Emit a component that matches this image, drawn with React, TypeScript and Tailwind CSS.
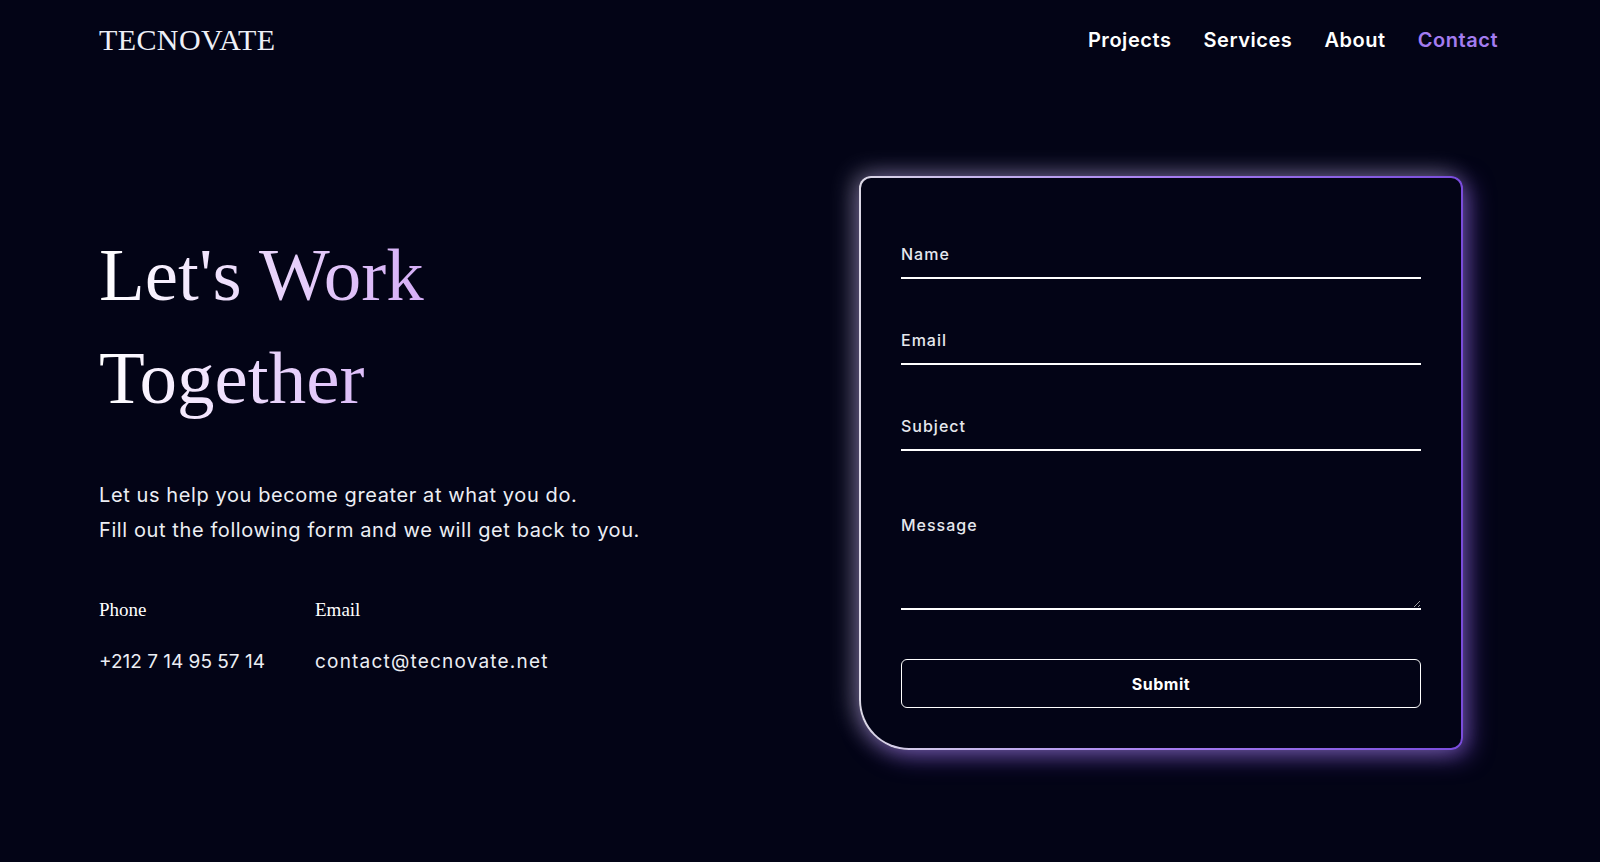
export default function App() {
  const sans = "font-['Inter','Open_Sans',sans-serif]";

  return (
    <div className={`min-h-[862px] w-full bg-[#030416] text-white ${sans}`}>
      <header className="flex h-[80px] items-center justify-between pl-[99px] pr-[102px]">
        <div className="font-['Liberation_Serif',serif] text-[30px] leading-none tracking-[0.4px] text-[#eef0f6]">
          TECNOVATE
        </div>
        <nav className="flex items-center gap-[32px] text-[20px] font-semibold tracking-[0.55px]">
          <a className="text-white">Projects</a>
          <a className="text-white">Services</a>
          <a className="text-white">About</a>
          <a className="text-[#a37cf0]">Contact</a>
        </nav>
      </header>

      <main className="flex pl-[99px] pr-[102px] pt-[96px]">
        <section className="flex-1 pt-[47px]">
          <h1 className="w-fit bg-gradient-to-r from-[#ffffff] to-[#d5aef6] bg-clip-text font-['Liberation_Serif',serif] text-[75px] leading-[103px] text-transparent">
            Let's Work
            <br />
            Together
          </h1>

          <p className="mt-[49px] text-[20px] leading-[35px] tracking-[0.6px] text-[#eceef4]">
            Let us help you become greater at what you do.
            <br />
            Fill out the following form and we will get back to you.
          </p>

          <div className="mt-[50px] grid grid-cols-[216px_auto]">
            <div className="font-['Liberation_Serif',serif] text-[19px] leading-[24px]">Phone</div>
            <div className="font-['Liberation_Serif',serif] text-[19px] leading-[24px]">Email</div>
            <div className="mt-[26px] text-[19px] leading-[28px] tracking-[0px] text-[#eceef4]">+212 7 14 95 57 14</div>
            <div className="mt-[26px] text-[19px] leading-[28px] tracking-[1.2px] text-[#eceef4]">
              contact@tecnovate.net
            </div>
          </div>
        </section>

        <div className="mr-[35px] w-[604px] rounded-[12px] rounded-bl-[50px] bg-gradient-to-r from-[#dcd8e6] via-[#a87ef2] to-[#7a4cdc] p-[2px] shadow-[-6px_-3px_24px_rgba(255,255,255,0.32),6px_6px_24px_rgba(130,80,230,0.6)]">
          <form
            onSubmit={(e) => e.preventDefault()}
            className="flex flex-col rounded-[10px] rounded-bl-[48px] bg-[#030416] px-[40px] pb-[40px] pt-[53px]"
          >
            <input
              placeholder="Name"
              className="h-[48px] border-0 border-b-2 border-white bg-transparent text-[16px] font-medium tracking-[1px] text-white outline-none placeholder:text-[#e6e8ee]"
            />
            <input
              placeholder="Email"
              className="mt-[38px] h-[48px] border-0 border-b-2 border-white bg-transparent text-[16px] font-medium tracking-[1px] text-white outline-none placeholder:text-[#e6e8ee]"
            />
            <input
              placeholder="Subject"
              className="mt-[38px] h-[48px] border-0 border-b-2 border-white bg-transparent text-[16px] font-medium tracking-[1px] text-white outline-none placeholder:text-[#e6e8ee]"
            />
            <textarea
              placeholder="Message"
              className="mt-[38px] h-[121px] border-0 border-b-2 border-white bg-transparent pt-[24px] text-[16px] font-medium tracking-[1px] text-white outline-none [color-scheme:dark] placeholder:text-[#e6e8ee]"
            />
            <button
              type="submit"
              className="mt-[49px] h-[49px] rounded-[6px] border border-white bg-transparent text-[16px] font-bold tracking-[0.5px] text-white"
            >
              Submit
            </button>
          </form>
        </div>
      </main>
    </div>
  );
}
